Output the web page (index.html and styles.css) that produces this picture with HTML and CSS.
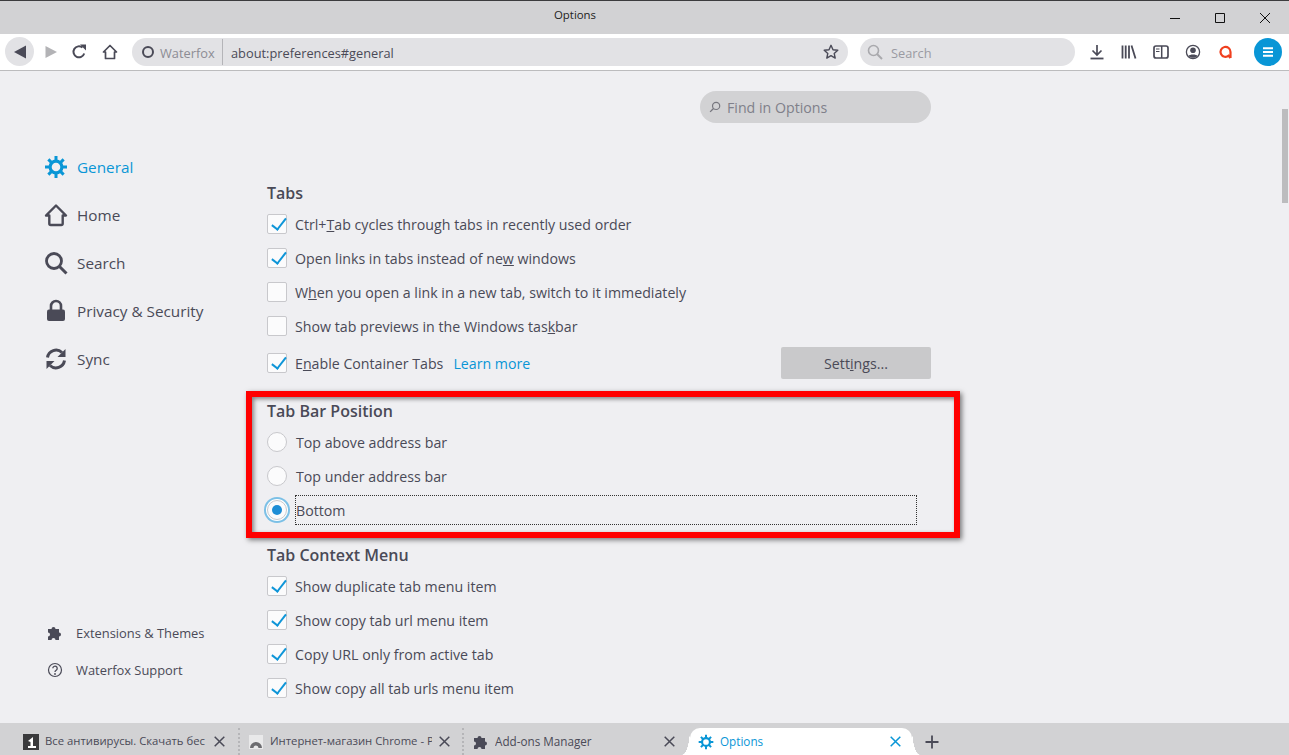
FILE: index.html
```html
<!DOCTYPE html>
<html lang="en">
<head>
<meta charset="utf-8">
<title>Options</title>
<link rel="stylesheet" href="styles.css">
</head>
<body>
<div class="app">
  <header class="titlebar">
    <div class="title">Options</div>
    <div class="winctl">
      <svg viewBox="0 0 12 12" class="wi"><path d="M1 6.500h10" stroke="#111" fill="none"/></svg>
      <svg viewBox="0 0 12 12" class="wi"><path d="M1.500 1.500h9v9h-9z" stroke="#111" fill="none"/></svg>
      <svg viewBox="0 0 12 12" class="wi"><path d="M1 1l10 10M11 1L1 11" stroke="#111" fill="none"/></svg>
    </div>
  </header>
  <nav class="toolbar">
    <button class="back"><svg viewBox="0 0 16 16" width="16" height="16"><path d="M14 1.500v13L2 8z" fill="#4a4a57"/></svg></button>
    <svg class="tb fwd" viewBox="0 0 16 16" width="16" height="16"><path d="M2.500 2v12L14 8z" fill="#b3b3b6"/></svg>
    <svg class="tb reload" viewBox="0 0 16 16" width="16" height="16"><path d="M13.200 9.500A5.500 5.500 0 1 1 11.500 3.600" fill="none" stroke="#4a4a57" stroke-width="2"/><path d="M9 .6h6v6z" fill="#4a4a57"/></svg>
    <svg class="tb home" viewBox="0 0 16 16" width="16" height="16"><path d="M1.500 8L8 1.500 14.500 8H12.500v6.500h-9V8z" fill="none" stroke="#4a4a57" stroke-width="1.700" stroke-linejoin="round"/></svg>
    <div class="urlbar">
      <span class="ring"></span>
      <span class="brand">Waterfox</span>
      <span class="url">about:preferences#general</span>
      <svg class="star" viewBox="0 0 16 16" width="16" height="16"><path d="M8 1.300l2 4.400 4.800.5-3.600 3.200 1 4.700L8 11.700l-4.200 2.400 1-4.700L1.200 6.200 6 5.700z" fill="none" stroke="#4a4a57" stroke-width="1.400" stroke-linejoin="round"/></svg>
    </div>
    <div class="searchbar">
      <svg viewBox="0 0 16 16" width="16" height="16"><circle cx="6.500" cy="6.500" r="5" fill="none" stroke="#a9a9ad" stroke-width="1.600"/><path d="M10 10l5 5" stroke="#a9a9ad" stroke-width="2"/></svg>
      <span>Search</span>
    </div>
    <div class="tools">
      <svg viewBox="0 0 16 16" width="16" height="16"><path d="M8 1v10M3.500 6.500L8 11l4.500-4.500" fill="none" stroke="#4a4a57" stroke-width="1.700"/><path d="M1.500 14.500h13" stroke="#4a4a57" stroke-width="1.800"/></svg>
      <svg viewBox="0 0 16 16" width="16" height="16"><path d="M1.500 1.500v13M4.700 1.500v13M8 1.500v13M10.500 1.500l4 13" fill="none" stroke="#4a4a57" stroke-width="1.800"/></svg>
      <svg viewBox="0 0 16 16" width="16" height="16"><rect x="1" y="2" width="14" height="12" rx="2" fill="none" stroke="#4a4a57" stroke-width="1.700"/><path d="M8.700 2v12" stroke="#4a4a57" stroke-width="1.500"/><path d="M3 5h3.500M3 7.500h3.500" stroke="#4a4a57"/></svg>
      <svg viewBox="0 0 16 16" width="16" height="16"><circle cx="8" cy="8" r="6.600" fill="none" stroke="#4a4a57" stroke-width="1.300"/><circle cx="8" cy="6.300" r="2.800" fill="#4a4a57"/><path d="M3.500 12c1-2 8-2 9 0-2 2.400-7 2.400-9 0z" fill="#4a4a57"/></svg>
      <svg viewBox="0 0 16 16" width="16" height="16"><path d="M13.500 14l-1.800-2.300A5 5 0 1 1 13.500 8v6" fill="none" stroke="#f0401f" stroke-width="2.200"/></svg>
      <button class="menu"><svg viewBox="0 0 12 12" width="12" height="12"><path d="M1 2.200h10M1 6h10M1 9.800h10" stroke="#fff" stroke-width="2"/></svg></button>
    </div>
  </nav>
  <main class="main">
    <aside class="sidebar">
      <ul class="cats">
        <li class="cat active"><svg viewBox="0 0 24 24" width="24" height="24"><g fill="#0996d6"><path fill-rule="evenodd" d="M12 4.500a7.500 7.500 0 1 0 0 15 7.500 7.500 0 0 0 0-15zm0 3.200a4.300 4.300 0 1 1 0 8.600 4.300 4.300 0 0 1 0-8.600z"/><path d="M10.500 1h3v5h-3zM10.500 18h3v5h-3zM1 10.500h5v3H1zM18 10.500h5v3h-5zM3.300 5.400l2.100-2.100 3.500 3.500-2.100 2.100zM15.100 17.200l2.100-2.100 3.500 3.500-2.100 2.100zM18.600 3.300l2.100 2.100-3.500 3.500-2.100-2.100zM6.800 15.100l2.100 2.100-3.500 3.500-2.100-2.100z"/></g></svg><span>General</span></li>
        <li class="cat"><svg viewBox="0 0 24 24" width="24" height="24"><path d="M2 12.500L12 2.500l10 10h-3.300v8a1.500 1.500 0 0 1-1.500 1.500H6.800a1.500 1.500 0 0 1-1.500-1.500v-8z" fill="none" stroke="#4a4a57" stroke-width="2.400" stroke-linejoin="round"/></svg><span>Home</span></li>
        <li class="cat"><svg viewBox="0 0 24 24" width="24" height="24"><circle cx="10" cy="10" r="7.500" fill="none" stroke="#4a4a57" stroke-width="2.800"/><path d="M15.500 15.500l7 7" stroke="#4a4a57" stroke-width="3"/></svg><span>Search</span></li>
        <li class="cat"><svg viewBox="0 0 24 24" width="24" height="24"><path d="M7 11V7a5 5 0 0 1 10 0v4" fill="none" stroke="#4a4a57" stroke-width="2.600"/><rect x="3" y="10.500" width="18" height="11.500" rx="2" fill="#4a4a57"/></svg><span>Privacy &amp; Security</span></li>
        <li class="cat"><svg viewBox="0 0 24 24" width="24" height="24"><path d="M3.500 10.500A8.700 8.700 0 0 1 18 5.500M20.500 13.500A8.700 8.700 0 0 1 6 18.500" fill="none" stroke="#4a4a57" stroke-width="3"/><path d="M21.500 2v8h-8zM2.500 22v-8h8z" fill="#4a4a57"/></svg><span>Sync</span></li>
      </ul>
      <ul class="links">
        <li class="lnk"><svg viewBox="0 0 16 16" width="16" height="16"><path d="M1 4h3.500a2 2 0 1 1 4 0H12v3.500a2 2 0 1 1 0 4V15H8.500a2 2 0 1 0-4 0H1v-3.500a2 2 0 1 0 0-4z" fill="#4a4a57"/></svg><span>Extensions &amp; Themes</span></li>
        <li class="lnk"><svg viewBox="0 0 16 16" width="16" height="16"><circle cx="8" cy="8" r="6.500" fill="none" stroke="#4a4a57" stroke-width="1.200"/><path d="M5.800 6.300a2.200 2.200 0 1 1 3.400 1.900c-.8.500-1.200.9-1.200 1.800" fill="none" stroke="#4a4a57" stroke-width="1.300"/><circle cx="8" cy="12" r=".9" fill="#4a4a57"/></svg><span>Waterfox Support</span></li>
      </ul>
    </aside>
    <section class="content">
      <div class="findrow"><div class="find"><svg viewBox="0 0 16 16" width="12" height="12"><circle cx="9.500" cy="6.500" r="4.800" fill="none" stroke="#77777f" stroke-width="1.600"/><path d="M6 10l-4.500 4.500" stroke="#77777f" stroke-width="1.800"/></svg><span>Find in Options</span></div></div>
      <h2 class="h h-tabs">Tabs</h2>
      <div class="row"><span class="cb on"></span><span>Ctrl+<u>T</u>ab cycles through tabs in recently used order</span></div>
      <div class="row"><span class="cb on"></span><span>Open links in tabs instead of ne<u>w</u> windows</span></div>
      <div class="row"><span class="cb"></span><span>W<u>h</u>en you open a link in a new tab, switch to it immediately</span></div>
      <div class="row"><span class="cb"></span><span>Show tab previews in the Windows tas<u>k</u>bar</span></div>
      <div class="row row-btn"><span class="cb on"></span><span>E<u>n</u>able Container Tabs</span><a class="learn">Learn more</a><button class="settings">Sett<u>i</u>ngs...</button></div>
      <h2 class="h h-pos">Tab Bar Position</h2>
      <div class="row"><span class="rd"></span><span class="rl">Top above address bar</span></div>
      <div class="row"><span class="rd"></span><span class="rl">Top under address bar</span></div>
      <div class="row"><span class="rd sel"></span><span class="rl focus">Bottom</span></div>
      <h2 class="h h-ctx">Tab Context Menu</h2>
      <div class="row"><span class="cb on"></span><span>Show duplicate tab menu item</span></div>
      <div class="row"><span class="cb on"></span><span>Show copy tab url menu item</span></div>
      <div class="row"><span class="cb on"></span><span>Copy URL only from active tab</span></div>
      <div class="row"><span class="cb on"></span><span>Show copy all tab urls menu item</span></div>
    </section>
    <div class="redbox"></div>
    <div class="thumb"></div>
  </main>
  <footer class="tabbar">
    <div class="tab t1">
      <svg viewBox="0 0 16 16" width="16" height="16"><rect width="16" height="16" fill="#3a3a3c"/><path d="M5 7l5-4v9h3v2H5v-2h2.500V8z" fill="#fff"/></svg>
      <span class="tt">Все антивирусы. Скачать бес</span>
      <svg class="x" viewBox="0 0 11 11" width="11" height="11"><path d="M.7.7l9.600 9.600M10.300.7L.7 10.300" stroke="#4a4a57" stroke-width="1.500"/></svg>
    </div>
    <div class="tab t2">
      <svg class="fav" viewBox="0 0 14 14" width="14" height="14"><rect width="14" height="14" fill="#e9e9ea"/><path d="M1 13a6 6 0 0 1 12 0h-3.500a2.500 2.500 0 0 0-5 0z" fill="#6c6c70"/></svg>
      <span class="tt">Интернет-магазин Chrome - P</span>
      <svg class="x" viewBox="0 0 11 11" width="11" height="11"><path d="M.7.7l9.600 9.600M10.300.7L.7 10.300" stroke="#4a4a57" stroke-width="1.500"/></svg>
    </div>
    <div class="tab t3">
      <svg viewBox="0 0 16 16" width="16" height="16"><path d="M1 4h3.500a2 2 0 1 1 4 0H12v3.500a2 2 0 1 1 0 4V15H8.500a2 2 0 1 0-4 0H1v-3.500a2 2 0 1 0 0-4z" fill="#4a4a57"/></svg>
      <span class="tt">Add-ons Manager</span>
      <svg class="x" viewBox="0 0 11 11" width="11" height="11"><path d="M.7.7l9.600 9.600M10.300.7L.7 10.300" stroke="#4a4a57" stroke-width="1.500"/></svg>
    </div>
    <div class="tab active">
      <svg viewBox="0 0 24 24" width="16" height="16"><g fill="#0996d6"><path fill-rule="evenodd" d="M12 4.500a7.500 7.500 0 1 0 0 15 7.500 7.500 0 0 0 0-15zm0 3.200a4.300 4.300 0 1 1 0 8.600 4.300 4.300 0 0 1 0-8.600z"/><path d="M10.500 1h3v5h-3zM10.500 18h3v5h-3zM1 10.500h5v3H1zM18 10.500h5v3h-5zM3.300 5.400l2.100-2.100 3.500 3.500-2.100 2.100zM15.100 17.200l2.100-2.100 3.500 3.500-2.100 2.100zM18.600 3.300l2.100 2.100-3.500 3.500-2.100-2.100zM6.800 15.100l2.100 2.100-3.500 3.500-2.100-2.100z"/></g></svg>
      <span class="tt">Options</span>
      <svg class="x" viewBox="0 0 11 11" width="11" height="11"><path d="M.7.7l9.600 9.600M10.300.7L.7 10.300" stroke="#0996d6" stroke-width="1.500"/></svg>
    </div>
    <svg class="plus" viewBox="0 0 16 16" width="16" height="16"><path d="M8 1.500v13M1.500 8h13" stroke="#4a4a57" stroke-width="1.800"/></svg>
  </footer>
</div>
</body>
</html>
```
FILE: styles.css
```css
* { box-sizing: border-box; }
html, body { margin: 0; padding: 0; height: 100%; overflow: hidden; }
body { font-family: "Open Sans", "Noto Sans", sans-serif; color: #4a4a57; }
.app { width: 1289px; height: 755px; display: flex; flex-direction: column; background: #efeff2; }
ul { list-style: none; margin: 0; padding: 0; }
h2 { margin: 0; }
button { font: inherit; color: inherit; border: 0; padding: 0; }

.titlebar { height: 34px; flex: none; background: #d2d2d4; border-top: 1px solid #3c3c3e; display: flex; justify-content: space-between; padding-left: 554px; }
.title { padding-top: 5px; font-size: 11.400px; line-height: 17px; color: #222; }
.winctl { display: flex; padding-right: 2px; }
.winctl .wi { width: 12px; height: 12px; margin: 11px 16px 0 17px; }

.toolbar { height: 37px; flex: none; background: #fff; border-bottom: 1px solid #bcbcbe; display: flex; align-items: center; padding-left: 5px; }
.back { width: 29px; height: 29px; border-radius: 50%; background: #e2e2e5; display: flex; align-items: center; justify-content: center; margin-top: -1px; }
.toolbar .tb { flex: none; margin-top: -1px; }
.fwd { margin-left: 9px; }
.reload { margin-left: 12px; }
.home { margin-left: 15px; }
.urlbar { margin-left: 14px; width: 716px; height: 28px; border-radius: 14px; background: #e2e2e5; display: flex; align-items: center; padding-left: 10px; margin-top: -1px; font-size: 12.800px; }
.ring { width: 12px; height: 12px; border: 2px solid #4a4a57; border-radius: 50%; flex: none; }
.brand { margin-left: 6px; color: #8c8c94; border-right: 1px solid #b4b4b8; height: 26px; line-height: 26px; width: 63px; flex: none; white-space: nowrap; padding-top: 1px; }
.url { margin-left: 8px; flex: 1; color: #4a4a57; padding-top: 2px; }
.star { margin-right: 9px; flex: none; }
.searchbar { margin-left: 12px; width: 215px; height: 28px; border-radius: 14px; background: #e2e2e5; display: flex; align-items: center; padding-left: 7px; margin-top: -1px; font-size: 12.800px; color: #9a9aa2; gap: 8px; }
.searchbar span { padding-top: 2px; }
.tools { display: flex; align-items: center; margin-left: 14px; margin-top: -1px; }
.tools svg { flex: none; margin-right: 16px; }
.tools > svg:nth-child(5) { margin-right: 21px; }
.menu { width: 28px; height: 28px; border-radius: 50%; background: #0996d6; display: flex; align-items: center; justify-content: center; }
.menu svg { margin: 0; }

.main { flex: 1; min-height: 0; display: flex; position: relative; overflow: hidden; }
.sidebar { width: 267px; flex: none; padding: 72px 0 35px 44px; display: flex; flex-direction: column; justify-content: space-between; height: 652px; }
.cat { height: 48px; display: flex; align-items: center; gap: 9px; font-size: 15.300px; color: #4a4a57; }
.cat svg { flex: none; }
.cat.active { color: #0996d6; }
.links { margin-left: 3px; }
.lnk { height: 37px; display: flex; align-items: center; gap: 13px; font-size: 12.900px; }
.lnk svg { flex: none; }

.content { width: 664px; flex: none; font-size: 14.200px; }
.findrow { display: flex; justify-content: flex-end; padding-top: 20px; }
.find { width: 231px; height: 32px; border-radius: 16px; background: #d2d2d4; display: flex; align-items: center; gap: 6px; padding-left: 9px; color: #80808a; font-size: 14.200px; }
.h { font-size: 16px; font-weight: 600; line-height: 22px; }
.h-tabs { margin-top: 59px; margin-bottom: 3px; }
.h-pos { margin-top: 20px; margin-bottom: 3px; }
.h-ctx { margin-top: 17px; margin-bottom: 3px; }
.row { height: 34px; display: flex; align-items: center; white-space: nowrap; }
.row-btn { margin-top: 3px; }
.cb { width: 20px; height: 20px; border: 1px solid #c8c8cc; border-radius: 2px; background: #fbfbfc; margin: -1px 8px 0 0; flex: none; position: relative; }
.cb.on::after { content: ""; position: absolute; left: 6.500px; top: .5px; width: 6px; height: 13px; border: solid #0e95d8; border-width: 0 2px 2px 0; transform: rotate(38deg); }
.learn { color: #0996d6; margin-left: 10px; }
.settings { margin-left: auto; width: 150px; height: 32px; background: #c9c9cb; border-radius: 2px; font-size: 14.200px; }
.rd { width: 20px; height: 20px; border: 1px solid #c8c8cc; border-radius: 50%; background: #fbfbfc; margin: -1px 8px 0 0; flex: none; position: relative; }
.rd.sel { box-shadow: 0 0 0 1px #fff, 0 0 0 3px #7cc0e6; }
.rd.sel::after { content: ""; position: absolute; left: 4px; top: 4px; width: 10px; height: 10px; border-radius: 50%; background: #1e8ed6; }
.rl { margin-left: 1px; }
.rl.focus { width: 621px; height: 30px; line-height: 29px; border: 1px dotted #333; margin-left: 0; width: 622px; }

.redbox { position: absolute; left: 246px; top: 320px; width: 714px; height: 147px; border: 6px solid #ff0000; box-shadow: 2px 2px 5px rgba(0,0,0,.5), inset 2px 2px 4px rgba(0,0,0,.45); }
.thumb { position: absolute; left: 1282px; top: 38px; width: 6px; height: 94px; background: #bcbcbe; }

.tabbar { height: 32px; flex: none; background: #d2d2d4; display: flex; align-items: flex-end; padding-left: 23px; font-size: 11.700px; }
.tab { height: 27px; display: flex; align-items: center; flex: none; position: relative; }
.tab svg { flex: none; }
.tab .tt { margin-left: 6px; overflow: hidden; white-space: nowrap; flex: 1; min-width: 0; padding-bottom: 2px; }
.tab .x { margin-left: 7px; }
.t1 { width: 215px; padding-right: 13px; }
.t1 .tt, .t2 .tt { font-size: 11.300px; }
.t2, .t3 { border-left: 2px dotted #b5b5b8; }
.t2 { width: 224px; padding: 0 12px 0 9px; }
.t2 .tt { margin-left: 7px; }
.t3 { width: 220px; padding: 0 7px 0 9px; }
.tab.active { width: 222px; background: #fff; border-radius: 10px 10px 0 0; padding: 0 11px 0 8px; color: #0996d6; margin-left: 8px; }
.tab.active::before, .tab.active::after { content: ""; position: absolute; bottom: 0; width: 8px; height: 27px; }
.tab.active::before { left: -8px; background: radial-gradient(ellipse 8px 27px at 0 0, transparent 98%, #fff 100%); }
.tab.active::after { right: -8px; background: radial-gradient(ellipse 8px 27px at 100% 0, transparent 98%, #fff 100%); }
.plus { margin: 0 0 5px 12px; flex: none; }
```
